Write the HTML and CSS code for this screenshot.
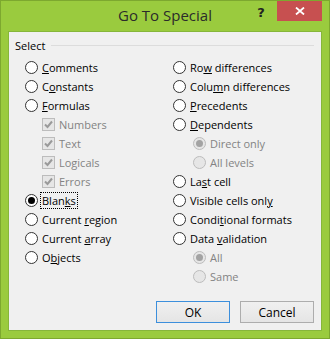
FILE: index.html
```html
<!DOCTYPE html>
<html lang="en">
<head>
    <meta charset="UTF-8">
    <title>Go To Special</title>
    <link rel="stylesheet" href="styles.css">
</head>
<body>
    <div class="window">
        <div class="titlebar">
            <div></div>
            <div class="title">Go To Special</div>
            <div class="caption-buttons">
                <span class="help">?</span>
                <span class="close">
                    <svg width="10" height="8" viewBox="0 0 10 8"><path d="M1 0.5 L9 7.5 M9 0.5 L1 7.5" stroke="#fff" stroke-width="1.8" fill="none"/></svg>
                </span>
            </div>
        </div>

        <div class="panel">
            <div class="legend"><span>Select</span><span class="rule"></span></div>

            <div class="options">
                <div class="column">
                    <div class="row"><span class="radio"></span><span><u>C</u>omments</span></div>
                    <div class="row"><span class="radio"></span><span>C<u>o</u>nstants</span></div>
                    <div class="row"><span class="radio"></span><span><u>F</u>ormulas</span></div>
                    <div class="row sub disabled"><span class="check"><svg width="11" height="11" viewBox="0 0 11 11"><path d="M2 5.5 L4.5 8 L9 2.5" stroke="#9a9a9a" stroke-width="2" fill="none"/></svg></span><span>Numbers</span></div>
                    <div class="row sub disabled"><span class="check"><svg width="11" height="11" viewBox="0 0 11 11"><path d="M2 5.5 L4.5 8 L9 2.5" stroke="#9a9a9a" stroke-width="2" fill="none"/></svg></span><span>Text</span></div>
                    <div class="row sub disabled"><span class="check"><svg width="11" height="11" viewBox="0 0 11 11"><path d="M2 5.5 L4.5 8 L9 2.5" stroke="#9a9a9a" stroke-width="2" fill="none"/></svg></span><span>Logicals</span></div>
                    <div class="row sub disabled"><span class="check"><svg width="11" height="11" viewBox="0 0 11 11"><path d="M2 5.5 L4.5 8 L9 2.5" stroke="#9a9a9a" stroke-width="2" fill="none"/></svg></span><span>Errors</span></div>
                    <div class="row"><span class="radio checked"></span><span class="focus">Blan<u>k</u>s</span></div>
                    <div class="row"><span class="radio"></span><span>Current <u>r</u>egion</span></div>
                    <div class="row"><span class="radio"></span><span>Current <u>a</u>rray</span></div>
                    <div class="row"><span class="radio"></span><span>O<u>b</u>jects</span></div>
                </div>
                <div class="column">
                    <div class="row"><span class="radio"></span><span>Ro<u>w</u> differences</span></div>
                    <div class="row"><span class="radio"></span><span>Colu<u>m</u>n differences</span></div>
                    <div class="row"><span class="radio"></span><span><u>P</u>recedents</span></div>
                    <div class="row"><span class="radio"></span><span><u>D</u>ependents</span></div>
                    <div class="row sub-radio disabled"><span class="radio checked"></span><span>Direct only</span></div>
                    <div class="row sub-radio disabled"><span class="radio"></span><span>All levels</span></div>
                    <div class="row"><span class="radio"></span><span>La<u>s</u>t cell</span></div>
                    <div class="row"><span class="radio"></span><span>Visible cells onl<u>y</u></span></div>
                    <div class="row"><span class="radio"></span><span>Condi<u>t</u>ional formats</span></div>
                    <div class="row"><span class="radio"></span><span>Data <u>v</u>alidation</span></div>
                    <div class="row sub-radio disabled"><span class="radio checked"></span><span>All</span></div>
                    <div class="row sub-radio disabled"><span class="radio"></span><span>Same</span></div>
                </div>
            </div>

            <div class="buttons">
                <button class="default">OK</button>
                <button>Cancel</button>
            </div>
        </div>
    </div>
</body>
</html>
```

FILE: styles.css
```css
body {
    margin: 0;
    font-family: "Open Sans", "Noto Sans", sans-serif;
    font-size: 11px;
    color: #000;
}

.window {
    width: 330px;
    height: 339px;
    box-sizing: border-box;
    background-color: #9acb3e;
    border: 1px solid #7da82f;
    display: flex;
    flex-direction: column;
}

.titlebar {
    height: 30px;
    display: grid;
    grid-template-columns: 1fr auto 1fr;
}

.title {
    font-size: 15px;
    color: #2b2b2b;
    padding-top: 4px;
}

.caption-buttons {
    display: flex;
    justify-content: flex-end;
    align-items: flex-start;
    padding-right: 7px;
}

.help {
    width: 26px;
    margin-right: 3px;
    text-align: center;
    font-family: "DejaVu Sans", sans-serif;
    font-weight: bold;
    font-size: 13px;
    line-height: 24px;
    color: #222;
}

.close {
    width: 45px;
    height: 20px;
    background-color: #c75050;
    display: flex;
    align-items: center;
    justify-content: center;
}

.panel {
    flex: 1;
    margin: 0 7px 7px 7px;
    background-color: #f0f0f0;
    border: 1px solid #86b63a;
    padding: 5px 7px 7px 6px;
    display: flex;
    flex-direction: column;
}

.legend {
    display: flex;
    align-items: center;
    height: 16px;
}

.legend .rule {
    flex: 1;
    margin-left: 6px;
    border-top: 1px solid #dcdcdc;
}

.options {
    display: grid;
    grid-template-columns: 148px 1fr;
    margin-top: 5px;
}

.row {
    height: 19px;
    display: flex;
    align-items: center;
    gap: 4px;
    padding-left: 10px;
    white-space: nowrap;
}

.row.sub {
    padding-left: 27px;
}

.row.sub-radio {
    padding-left: 30px;
}

.radio {
    width: 13px;
    height: 13px;
    box-sizing: border-box;
    border: 1px solid #333;
    border-radius: 50%;
    background-color: #fff;
    display: flex;
    align-items: center;
    justify-content: center;
    flex: none;
}

.radio.checked::after {
    content: "";
    width: 7px;
    height: 7px;
    border-radius: 50%;
    background-color: #000;
}

.check {
    width: 13px;
    height: 13px;
    box-sizing: border-box;
    border: 1px solid #bcbcbc;
    background-color: #e6e6e6;
    display: flex;
    align-items: center;
    justify-content: center;
    flex: none;
}

.check svg {
    display: block;
}

.disabled {
    color: #838383;
}

.disabled .radio {
    border-color: #bcbcbc;
    background-color: #e6e6e6;
}

.disabled .radio.checked::after {
    background-color: #a3a3a3;
}

.focus {
    outline: 1px dotted #000;
    padding: 0 1px;
    margin-left: -1px;
}

.buttons {
    margin-top: auto;
    display: flex;
    justify-content: flex-end;
    gap: 10px;
}

button {
    width: 74px;
    height: 22px;
    font-family: inherit;
    font-size: 12px;
    color: #000;
    border: 1px solid #adadad;
    background: linear-gradient(#f0f0f0, #e5e5e5);
    padding: 0;
}

button.default {
    border-color: #3c8fdc;
}
```
